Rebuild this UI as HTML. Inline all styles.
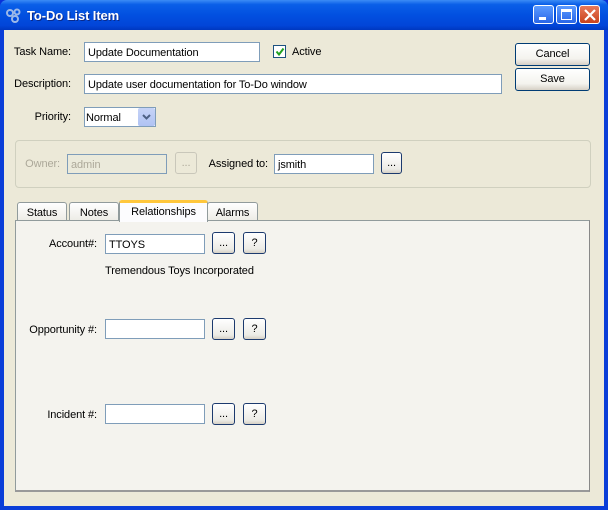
<!DOCTYPE html>
<html><head><style>
*{box-sizing:border-box;margin:0;padding:0}
body{width:608px;height:510px;overflow:hidden;font-family:"Liberation Sans",sans-serif;font-size:11px;color:#000;background:#0831d9;letter-spacing:-0.1px}
.win{position:absolute;left:0;top:0;width:608px;height:510px;background:#0a3ed8;border-radius:7px 7px 0 0}
.title{position:absolute;left:0;top:0;width:608px;height:30px;border-radius:7px 7px 0 0;background:linear-gradient(#3b8cf5 0%,#0a5fe8 15%,#0250e0 50%,#0245d8 85%,#0037c0 100%)}
.title span{position:absolute;left:27px;top:8px;color:#fff;font-weight:bold;font-size:13px;text-shadow:1px 1px #0a2a8a}
.body{position:absolute;left:4px;top:30px;width:600px;height:476px;background:#ece9d8}
.a{position:absolute}
.lbl{position:absolute;white-space:nowrap}
.r{position:absolute;white-space:nowrap;text-align:right;width:100px}
.inp{position:absolute;background:#fff;border:1px solid #7f9db9;padding:3px 3px 0;height:20px;line-height:14px;white-space:nowrap}
.btn{position:absolute;border:1px solid #003c74;border-radius:3px;background:linear-gradient(#fff,#f4f3ee 70%,#d6d0c5);text-align:center;line-height:21px}
.tb{position:absolute;width:21px;height:22px;border-radius:3px;border:1px solid #1c3a6e;background:linear-gradient(#fff,#ecebe6 80%,#d6d0c5);text-align:center;line-height:21px}
.tab{position:absolute;top:202px;height:19px;border:1px solid #919b9c;border-bottom:none;border-radius:3px 3px 0 0;background:linear-gradient(#fff,#ecebe5);text-align:center;line-height:20px}
.cb{position:absolute;width:21px;height:19px;border-radius:3px}
</style></head><body>
<div class="win">
<div class="title">
<svg class="a" style="left:6px;top:8px" width="16" height="15"><circle cx="4" cy="5" r="3" fill="none" stroke="#9cb8e8" stroke-width="2"/><circle cx="11" cy="4" r="2.5" fill="none" stroke="#9cb8e8" stroke-width="2"/><circle cx="9" cy="11" r="3" fill="none" stroke="#9cb8e8" stroke-width="2"/></svg>
<span>To-Do List Item</span>
<div class="cb" style="left:533px;top:5px;background:linear-gradient(#5b9bff,#2a66e8);border:1px solid #fff"><div class="a" style="left:5px;top:11px;width:7px;height:3px;background:#fff"></div></div>
<div class="cb" style="left:556px;top:5px;background:linear-gradient(#5b9bff,#2a66e8);border:1px solid #fff"><div class="a" style="left:4px;top:3px;width:11px;height:11px;border:1px solid #fff;border-top-width:3px"></div></div>
<div class="cb" style="left:579px;top:5px;background:linear-gradient(#e8795a,#c9421c);border:1px solid #fff"><svg class="a" style="left:4px;top:3px" width="12" height="12"><path d="M1 1L11 11M11 1L1 11" stroke="#fff" stroke-width="2.2"/></svg></div>
</div>
<div class="body"></div>
<div class="r" style="left:-29px;top:46px">Task Name:</div>
<div class="inp" style="left:84px;top:42px;width:176px">Update Documentation</div>
<div class="a" style="left:273px;top:45px;width:13px;height:13px;border:1px solid #1c5180;background:#fff"><svg class="a" style="left:1px;top:1px" width="10" height="10"><path d="M1.5 4.5L4 7.5L8.5 1.5" stroke="#21a121" stroke-width="2" fill="none"/></svg></div>
<div class="lbl" style="left:292px;top:46px">Active</div>
<div class="btn" style="left:515px;top:43px;width:75px;height:23px">Cancel</div>
<div class="btn" style="left:515px;top:68px;width:75px;height:23px">Save</div>
<div class="r" style="left:-29px;top:78px">Description:</div>
<div class="inp" style="left:84px;top:74px;width:418px">Update user documentation for To-Do window</div>
<div class="r" style="left:-29px;top:111px">Priority:</div>
<div class="inp" style="left:84px;top:107px;width:72px;padding-left:1px">Normal</div>
<div class="a" style="left:138px;top:108px;width:17px;height:18px;background:linear-gradient(#c6d3f7,#b0c3f3);border-radius:2px"><svg class="a" style="left:4px;top:6px" width="9" height="6"><path d="M1 1L4.5 4.5L8 1" stroke="#4d6185" stroke-width="2" fill="none"/></svg></div>
<div class="a" style="left:15px;top:140px;width:576px;height:48px;border:1px solid #d0d0bf;border-radius:4px"></div>
<div class="r" style="left:-40px;top:158px;color:#aca899">Owner:</div>
<div class="inp" style="left:67px;top:154px;width:100px;background:#ebeadb;color:#aca899">admin</div>
<div class="a" style="left:175px;top:152px;width:22px;height:22px;border:1px solid #c9c7ba;border-radius:3px;color:#aca899;text-align:center;line-height:21px">...</div>
<div class="r" style="left:168px;top:158px">Assigned to:</div>
<div class="inp" style="left:274px;top:154px;width:100px">jsmith</div>
<div class="tb" style="left:381px;top:152px">...</div>
<div class="tab" style="left:17px;width:50px">Status</div>
<div class="tab" style="left:69px;width:50px">Notes</div>
<div class="tab" style="left:207px;width:51px">Alarms</div>
<div class="a" style="left:15px;top:220px;width:575px;height:272px;background:#f4f3ee;border:1px solid #919b9c;border-right-color:#888;border-bottom:2px solid #999"></div>
<div class="a" style="left:119px;top:200px;width:89px;height:22px;background:#fcfcfe;border:1px solid #919b9c;border-bottom:none;border-top:3px solid #ffc73c;border-radius:3px 3px 0 0;text-align:center;line-height:18px">Relationships</div>
<div class="r" style="left:-3px;top:238px">Account#:</div>
<div class="inp" style="left:105px;top:234px;width:100px">TTOYS</div>
<div class="tb" style="left:212px;top:232px;width:23px">...</div>
<div class="tb" style="left:243px;top:232px;width:23px">?</div>
<div class="lbl" style="left:105px;top:265px">Tremendous Toys Incorporated</div>
<div class="r" style="left:-3px;top:324px">Opportunity #:</div>
<div class="inp" style="left:105px;top:319px;width:100px"></div>
<div class="tb" style="left:212px;top:318px;width:23px">...</div>
<div class="tb" style="left:243px;top:318px;width:23px">?</div>
<div class="r" style="left:-3px;top:409px">Incident #:</div>
<div class="inp" style="left:105px;top:404px;width:100px"></div>
<div class="tb" style="left:212px;top:403px;width:23px">...</div>
<div class="tb" style="left:243px;top:403px;width:23px">?</div>
</div>
</body></html>
